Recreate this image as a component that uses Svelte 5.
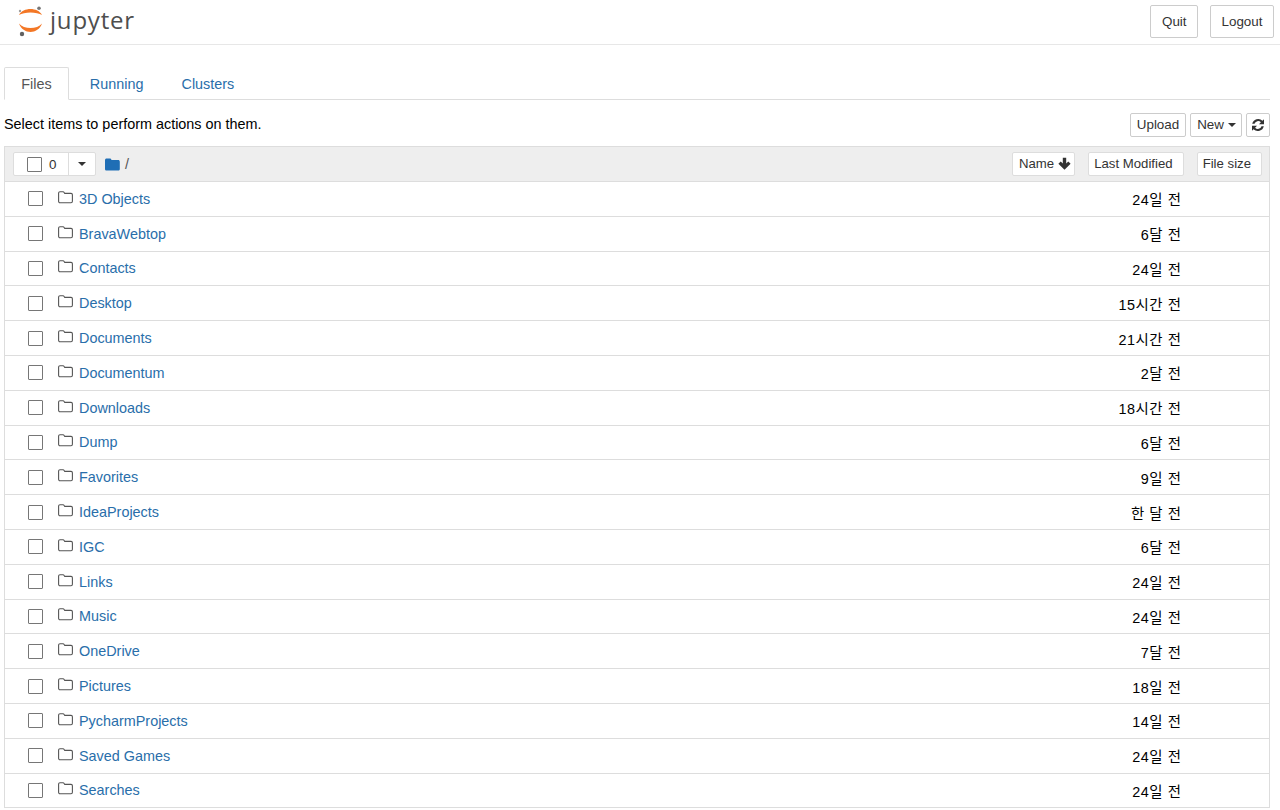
<script>
	const rows = [
		['3D Objects', '24일 전'],
		['BravaWebtop', '6달 전'],
		['Contacts', '24일 전'],
		['Desktop', '15시간 전'],
		['Documents', '21시간 전'],
		['Documentum', '2달 전'],
		['Downloads', '18시간 전'],
		['Dump', '6달 전'],
		['Favorites', '9일 전'],
		['IdeaProjects', '한 달 전'],
		['IGC', '6달 전'],
		['Links', '24일 전'],
		['Music', '24일 전'],
		['OneDrive', '7달 전'],
		['Pictures', '18일 전'],
		['PycharmProjects', '14일 전'],
		['Saved Games', '24일 전'],
		['Searches', '24일 전']
	];
</script>

<div class="page">
	<header class="topbar">
		<div class="logo">
			<svg width="28" height="32" viewBox="0 0 28 32" aria-hidden="true">
				<path d="M2 9C6 1 21 1 25 9C20 5.500 7 5.500 2 9Z" fill="#f37726" />
				<path d="M2 17.500C6 28.800 21 28.800 25 17.500C20 23.500 7 23.500 2 17.500Z" fill="#f37726" />
				<circle cx="22" cy="2.200" r="1.800" fill="#767677" />
				<circle cx="3" cy="5" r="1.200" fill="#9e9e9e" />
				<circle cx="5" cy="28" r="2.200" fill="#616262" />
			</svg>
			<span class="wordmark">jupyter</span>
		</div>
		<div class="top-actions">
			<button class="btn top">Quit</button>
			<button class="btn top">Logout</button>
		</div>
	</header>

	<main class="content">
		<nav class="tabs">
			<span class="tab active">Files</span>
			<span class="tab">Running</span>
			<span class="tab">Clusters</span>
		</nav>

		<div class="toolbar">
			<span>Select items to perform actions on them.</span>
			<div class="tools">
				<button class="btn small">Upload</button>
				<button class="btn small new">New <i class="caret"></i></button>
				<button class="btn small refresh" aria-label="Refresh">
					<svg width="14" height="14" viewBox="0 0 14 14" aria-hidden="true">
						<path d="M13 1.200v5H8l1.900-1.900A3.800 3.800 0 0 0 3.500 5.800H1.200A6.200 6.200 0 0 1 11.500 2.700Z" fill="#333" />
						<path d="M1 12.800v-5h5L4.100 9.700a3.800 3.800 0 0 0 6.400-1.500h2.300A6.200 6.200 0 0 1 2.500 11.300Z" fill="#333" />
					</svg>
				</button>
			</div>
		</div>

		<section class="list">
			<div class="list-head">
				<div class="select-group">
					<span class="select-main"><i class="check"></i><span>0</span></span>
					<span class="select-drop"><i class="caret"></i></span>
				</div>
				<svg class="crumb" width="15" height="13" viewBox="0 0 15 13" aria-hidden="true">
					<path d="M0 2.200C0 1.200.7.5 1.600.5h3.200c.9 0 1.200.5 1.500 1.100l.3.5h6.600c.9 0 1.600.7 1.600 1.600v7.200c0 .9-.7 1.600-1.600 1.600H1.600C.7 12.500 0 11.800 0 10.900Z" fill="#1f6eb5" />
				</svg>
				<span class="slash">/</span>
				<div class="sorts">
					<button class="btn sort name-sort">Name
						<svg width="13" height="13" viewBox="0 0 13 13" aria-hidden="true">
							<path d="M4.800.8h3.400v5.700L10.300 4.400 12.600 6.700 6.500 12.800.4 6.700 2.700 4.400 4.800 6.500Z" fill="#333" />
						</svg>
					</button>
					<button class="btn sort">Last Modified</button>
					<button class="btn sort">File size</button>
				</div>
			</div>
			{#each rows as [name, age]}
				<div class="row">
					<i class="check"></i>
					<svg class="folder" width="15" height="13" viewBox="0 0 15 13" aria-hidden="true">
						<path d="M.6 2.200c0-.8.6-1.400 1.400-1.400h3c.7 0 1 .4 1.300.9l.4.7h6.300c.8 0 1.400.6 1.400 1.400v6.500c0 .8-.6 1.400-1.400 1.400H2c-.8 0-1.400-.6-1.400-1.400Z" fill="none" stroke="#555" stroke-width="1.100" />
					</svg>
					<a class="name" href="#/">{name}</a>
					<span class="age">{age}</span>
				</div>
			{/each}
		</section>
	</main>
</div>

<style>
	:global(body) {
		margin: 0;
		background: #fff;
	}

	.page {
		height: 810px;
		overflow: hidden;
		font-family: 'Liberation Sans', 'Noto Sans CJK KR', sans-serif;
		font-size: 14.4px;
		color: #000;
	}

	.topbar {
		height: 45px;
		box-sizing: border-box;
		display: flex;
		justify-content: space-between;
		align-items: flex-start;
		padding-right: 6px;
		border-bottom: 1px solid #e7e7e7;
	}

	.logo {
		display: flex;
		align-items: center;
		height: 44px;
		margin-left: 17px;
		gap: 5px;
	}

	.wordmark {
		font-family: 'Open Sans', sans-serif;
		font-size: 24px;
		letter-spacing: 0.8px;
		color: #4e4e4e;
		line-height: 1;
		margin-top: -5px;
	}

	.top-actions {
		display: flex;
		gap: 12px;
		padding-top: 5px;
	}

	.btn {
		font: inherit;
		font-size: 13.4px;
		color: #333;
		background: #fff;
		border: 1px solid #ccc;
		border-radius: 2px;
		padding: 0;
		box-sizing: border-box;
	}

	.btn.top {
		height: 33px;
		padding: 0 10.5px;
	}

	.content {
		padding: 22px 10px 0 4px;
	}

	.tabs {
		display: flex;
		height: 33px;
		box-sizing: border-box;
		border-bottom: 1px solid #ddd;
	}

	.tab {
		height: 33px;
		box-sizing: border-box;
		padding: 8px 16.3px 0;
		margin-right: 3.5px;
		color: #296eaa;
		border: 1px solid transparent;
		border-radius: 2px 2px 0 0;
	}

	.tab.active {
		color: #555;
		border-color: #ddd #ddd #fff;
		background: #fff;
	}

	.toolbar {
		display: flex;
		justify-content: space-between;
		align-items: center;
		height: 46px;
		box-sizing: border-box;
		padding-top: 2px;
	}

	.tools {
		display: flex;
		gap: 4px;
		margin-top: 2px;
	}

	.btn.small {
		height: 24px;
		padding: 0 6px 1px;
		display: flex;
		align-items: center;
		gap: 3px;
	}

	.btn.small.new {
		gap: 4px;
		padding-right: 5px;
	}

	.btn.refresh {
		width: 24px;
		padding: 0 4px;
	}

	.caret {
		display: inline-block;
		width: 0;
		height: 0;
		border-top: 4px solid #333;
		border-left: 4px solid transparent;
		border-right: 4px solid transparent;
	}

	.list {
		border: 1px solid #ddd;
		border-bottom: 0;
	}

	.list-head {
		height: 35px;
		box-sizing: border-box;
		background: #eee;
		display: flex;
		align-items: center;
		padding: 0 7px 0 8px;
		border-bottom: 1px solid #ddd;
	}

	.select-group {
		display: flex;
		height: 24px;
		box-sizing: border-box;
		background: #fff;
		border: 1px solid #ddd;
		border-radius: 2px;
		font-size: 13.4px;
		color: #333;
	}

	.select-main {
		display: flex;
		align-items: center;
		gap: 7px;
		width: 54px;
		padding-left: 13px;
		box-sizing: border-box;
	}

	.select-drop {
		display: flex;
		align-items: center;
		justify-content: center;
		width: 26px;
		border-left: 1px solid #ddd;
	}

	.check {
		display: block;
		flex: none;
		width: 15px;
		height: 15px;
		box-sizing: border-box;
		border: 1px solid #767676;
		border-radius: 1px;
		background: #fff;
	}

	.crumb {
		margin-left: 9px;
	}

	.slash {
		margin-left: 5px;
		color: #555;
	}

	.sorts {
		margin-left: auto;
		display: flex;
		gap: 13px;
	}

	.btn.sort {
		height: 24px;
		font-size: 13.2px;
		padding: 0 10px 1px 5px;
		display: flex;
		align-items: center;
		gap: 4px;
		border-color: #ddd;
	}

	.btn.name-sort {
		padding: 0 3px 1px 6px;
	}

	.row {
		height: 34.8px;
		box-sizing: border-box;
		display: flex;
		align-items: center;
		padding-left: 23px;
		border-bottom: 1px solid #ddd;
	}

	.folder {
		margin-left: 15px;
		margin-top: -3px;
	}

	.name {
		margin-left: 6px;
		color: #296eaa;
		text-decoration: none;
	}

	.age {
		margin-left: auto;
		margin-right: 87.5px;
		letter-spacing: 0.55px;
	}
</style>
